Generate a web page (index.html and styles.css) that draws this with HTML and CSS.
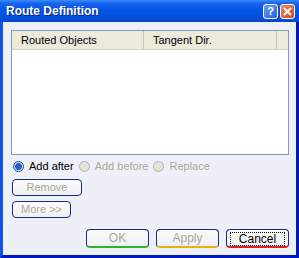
FILE: index.html
```html
<!DOCTYPE html>
<html lang="en">
<head>
  <meta charset="UTF-8">
  <title>Route Definition</title>
  <link rel="stylesheet" href="styles.css">
</head>
<body>

  <div class="window">
    <!-- barra de titulo -->
    <div class="titlebar">
      <span class="title">Route Definition</span>
      <span class="tbtn help">?</span>
      <span class="tbtn close">
        <svg width="9" height="9" viewBox="0 0 9 9"><path d="M1 1 L8 8 M8 1 L1 8" stroke="#fff" stroke-width="2"/></svg>
      </span>
    </div>

    <div class="content">
      <div class="list">
        <div class="list-head">
          <div class="col col1">Routed Objects</div>
          <div class="col col2">Tangent Dir.</div>
        </div>
      </div>

      <div class="radios">
        <label class="radio on"><span class="dot"></span>Add after</label>
        <label class="radio off"><span class="dot"></span>Add before</label>
        <label class="radio off"><span class="dot"></span>Replace</label>
      </div>

      <div class="btn small remove">Remove</div>
      <div class="btn small more">More &gt;&gt;</div>

      <div class="actions">
        <div class="btn big ok">OK</div>
        <div class="btn big apply">Apply</div>
        <div class="btn big cancel"><span class="focus">Cancel</span></div>
      </div>
    </div>
  </div>

</body>
</html>
```

FILE: styles.css
```css
body {
  margin: 0;
  font-family: "Liberation Sans", Arial, sans-serif;
  font-size: 11px;
}
.window {
  width: 299px;
  height: 258px;
  box-sizing: border-box;
  background: #0a3fd6;
  border-left: 3px solid #1155e8;
  border-right: 3px solid #0018b0;
  border-bottom: 3px solid #0019c4;
  display: flex;
  flex-direction: column;
}
.titlebar {
  height: 22px;
  margin: 0 -3px;
  padding: 0 4px 0 6px;
  display: flex;
  align-items: center;
  background: linear-gradient(#3b8cfa 0, #1a66ec 3px, #0055e5 10px, #0250df 18px, #0a46c8 22px);
}
.title {
  flex: 1;
  color: #fff;
  font-weight: bold;
  font-size: 12px;
  text-shadow: 1px 1px 0 #0a2480;
}
.tbtn {
  width: 13px;
  height: 13px;
  border: 1px solid #fff;
  border-radius: 3px;
  margin-left: 2px;
  display: flex;
  align-items: center;
  justify-content: center;
  color: #fff;
  font-weight: bold;
  font-size: 11px;
}
.help {
  background: linear-gradient(135deg, #6b9cf7, #2c62e0);
}
.close {
  background: linear-gradient(135deg, #ee8a6a, #d5431a);
}
.content {
  flex: 1;
  background: #edf1f7;
  padding: 8px 7px 0 8px;
}
.list {
  height: 123px;
  background: #fff;
  border: 1px solid #7f9db9;
}
.list-head {
  display: flex;
  height: 18px;
  background: #ebeadb;
  border-bottom: 1px solid #d6d2c2;
  color: #000;
}
.col {
  line-height: 18px;
  padding-left: 9px;
  border-right: 1px solid #c7c5b2;
  margin: 0;
}
.col1 {
  width: 122px;
}
.col2 {
  width: 123px;
}
.radios {
  display: flex;
  margin: 4px 0 0 2px;
  height: 14px;
  align-items: center;
}
.radio {
  display: flex;
  align-items: center;
  margin-right: 5px;
}
.dot {
  width: 9px;
  height: 9px;
  border-radius: 50%;
  margin-right: 5px;
  box-sizing: content-box;
}
.radio.on {
  color: #000;
}
.radio.on .dot {
  border: 1px solid #1c4ea0;
  background: radial-gradient(circle, #2d5dbd 0, #2d5dbd 3px, #dde4f5 4px);
}
.radio.off {
  color: #aca899;
}
.radio.off .dot {
  border: 1px solid #9fb4d6;
  background: #e6e2d4;
}
.btn {
  box-sizing: border-box;
  border: 1px solid #1a2c80;
  border-radius: 4px;
  background: linear-gradient(#fbfbfa, #eef0f4);
  color: #aca899;
  text-align: center;
}
.small {
  height: 17px;
  line-height: 15px;
  font-size: 11px;
}
.remove {
  width: 70px;
  margin: 6px 0 0 1px;
}
.more {
  width: 59px;
  margin: 5px 0 0 1px;
}
.actions {
  display: flex;
  justify-content: flex-end;
  gap: 7px;
  margin-top: 11px;
  padding-right: 0;
}
.big {
  width: 63px;
  height: 19px;
  line-height: 17px;
  font-size: 12px;
  border-bottom-width: 2px;
}
.ok {
  border-bottom-color: #2fb52c;
}
.apply {
  border-bottom-color: #e5b018;
}
.cancel {
  border-bottom-color: #e02020;
  color: #000;
  padding: 2px 3px;
  line-height: 12px;
}
.focus {
  display: block;
  border: 1px dotted #000;
}
```
